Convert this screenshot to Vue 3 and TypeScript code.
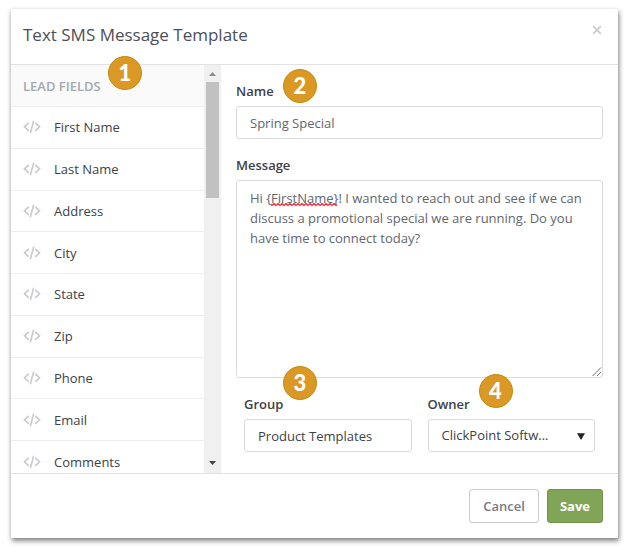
<script setup lang="ts">
import { ref } from 'vue'

const leadFields: string[] = [
  'First Name',
  'Last Name',
  'Address',
  'City',
  'State',
  'Zip',
  'Phone',
  'Email',
  'Comments',
]

const name = ref('Spring Special')
const message = ref(
  'Hi {FirstName}! I wanted to reach out and see if we can discuss a promotional special we are running. Do you have time to connect today?',
)
const group = ref('Product Templates')
const owner = ref('clickpoint')

function insertField(field: string): void {
  message.value += ` {${field.replace(/\s/g, '')}}`
}
</script>

<template>
  <div class="page">
    <form class="modal" role="dialog" aria-labelledby="modal-title" @submit.prevent>
      <header class="modal-header">
        <h1 id="modal-title" class="title">Text SMS Message Template</h1>
        <button type="button" class="close" aria-label="Close">
          <svg width="10" height="10" viewBox="0 0 10 10" aria-hidden="true">
            <path d="M1.2 1.2 8.8 8.8M8.8 1.2 1.2 8.8" fill="none" stroke="currentColor" stroke-width="1.9" />
          </svg>
        </button>
      </header>

      <div class="modal-body">
        <aside class="sidebar">
          <div class="scroller">
            <h2 class="list-title">LEAD FIELDS</h2>
            <ul class="fields">
              <li v-for="field in leadFields" :key="field">
                <button type="button" class="field-button" @click="insertField(field)">
                  <svg class="code" width="18" height="14" viewBox="0 0 18 14" aria-hidden="true">
                    <path d="M5.8 2.8 1.4 6.8 5.8 10.8M12.2 2.8 16.6 6.8 12.2 10.8" />
                    <path d="M10.7 0.8 7.3 13.2" />
                  </svg>
                  <span>{{ field }}</span>
                </button>
              </li>
            </ul>
          </div>
          <div class="scrollbar" aria-hidden="true">
            <svg class="arrow-up" width="7" height="4" viewBox="0 0 7 4"><path d="M0 4 3.5 0 7 4z" /></svg>
            <div class="track"><div class="thumb"></div></div>
            <svg class="arrow-down" width="7" height="4" viewBox="0 0 7 4"><path d="M0 0 3.5 4 7 0z" /></svg>
          </div>
          <span class="step step-1">1</span>
        </aside>

        <main class="content">
          <div class="field">
            <label for="tpl-name">Name</label>
            <input id="tpl-name" v-model="name" class="control" type="text" />
            <span class="step step-2">2</span>
          </div>
          <div class="field">
            <label for="tpl-message">Message</label>
            <div class="message-box">
              <textarea id="tpl-message" v-model="message" class="control message" spellcheck="false"></textarea>
              <svg class="squiggle" width="66" height="4" aria-hidden="true">
                <defs>
                  <pattern id="wave" width="4" height="4" patternUnits="userSpaceOnUse">
                    <path d="M-1 0 1 2.6 3 0.4 5 2.6" fill="none" stroke="#f5303c" stroke-width="1.2" />
                  </pattern>
                </defs>
                <rect width="66" height="4" fill="url(#wave)" />
              </svg>
              <svg class="grip" width="10" height="10" viewBox="0 0 10 10" aria-hidden="true">
                <path d="M0.5 9 9 0.5M5 9 9 5" fill="none" stroke="#777" stroke-width="1" />
              </svg>
            </div>
          </div>
          <div class="pair">
            <div class="field">
              <label for="tpl-group">Group</label>
              <input id="tpl-group" v-model="group" class="control dark" type="text" />
              <span class="step step-3">3</span>
            </div>
            <div class="field">
              <label for="tpl-owner">Owner</label>
              <div class="select-box">
                <select id="tpl-owner" v-model="owner" class="control dark select">
                  <option value="clickpoint">ClickPoint Softw...</option>
                </select>
                <svg class="caret" width="8" height="7" viewBox="0 0 8 7" aria-hidden="true">
                  <path d="M0 0.3H8L4 7z" fill="#222" />
                </svg>
              </div>
              <span class="step step-4">4</span>
            </div>
          </div>
        </main>
      </div>

      <footer class="modal-footer">
        <button type="button" class="btn cancel">Cancel</button>
        <button type="submit" class="btn save">Save</button>
      </footer>
    </form>
  </div>
</template>

<style>
body {
  background: #fff;
}
</style>

<style scoped>
.page,
.page * {
  box-sizing: border-box;
}

.page {
  padding: 9px 11px 13px;
  font-family: 'Open Sans', 'Noto Sans', sans-serif;
  font-size: 13px;
  line-height: 20px;
  color: #3d4148;
}

button,
input,
textarea,
select {
  font: inherit;
  margin: 0;
}

.modal {
  display: flex;
  flex-direction: column;
  background: #fff;
  box-shadow:
    1px 3px 5px rgba(0, 0, 0, 0.45),
    0 1px 4px rgba(0, 0, 0, 0.12);
}

.modal-header {
  display: flex;
  justify-content: space-between;
  align-items: flex-start;
  height: 56px;
  padding: 14px 16px 0 12px;
  border-bottom: 1px solid #e2e2e4;
}

.title {
  margin: 0;
  font-size: 17px;
  line-height: 24px;
  font-weight: 400;
  color: #4b4f57;
}

.close {
  display: flex;
  padding: 2px 0;
  border: 0;
  background: none;
  color: #ccc;
}

.modal-body {
  display: grid;
  grid-template-columns: 210px minmax(0, 1fr);
}

.sidebar {
  position: relative;
  display: grid;
  grid-template-columns: minmax(0, 1fr) 17px;
  grid-template-rows: 100%;
  contain: size;
}

.scroller {
  overflow-y: auto;
  scrollbar-width: none;
}

.list-title {
  margin: 0;
  height: 42px;
  padding: 0 12px;
  border-bottom: 1px solid #eee;
  background: #fafafa;
  font-size: 13px;
  line-height: 42px;
  font-weight: 600;
  color: #a5a8ae;
}

.fields {
  display: grid;
  grid-auto-rows: 1fr;
  min-height: 376px;
  margin: 0;
  padding: 0;
  list-style: none;
}

.fields li {
  display: grid;
  border-bottom: 1px solid #eee;
}

.field-button {
  display: flex;
  align-items: center;
  gap: 13px;
  padding: 0 12px;
  border: 0;
  background: none;
  color: inherit;
  text-align: left;
}

.code {
  fill: none;
  stroke: #c8cad2;
  stroke-width: 1.6;
}

.scrollbar {
  display: flex;
  flex-direction: column;
  align-items: center;
  padding: 7px 2px 8px;
  background: #f0f0f0;
}

.arrow-up {
  fill: #8c8c8c;
}

.arrow-down {
  fill: #444;
}

.track {
  flex: 1;
  width: 100%;
  padding: 6px 0;
}

.thumb {
  height: 31%;
  background: #c1c1c1;
}

.content {
  display: flex;
  flex-direction: column;
  gap: 16px;
  padding: 16px 15px 21px;
}

.field {
  position: relative;
}

.field label {
  display: block;
  margin-bottom: 5px;
  font-weight: 600;
}

.control {
  display: block;
  width: 100%;
  height: 33px;
  padding: 0 13px;
  border: 1px solid #d9dadd;
  border-radius: 3px;
  outline: 0;
  background: #fff;
  color: #62666e;
}

.dark {
  color: #3d4148;
}

.message-box,
.select-box {
  position: relative;
}

.message {
  height: 198px;
  padding: 7px 13px;
  resize: none;
  overflow: hidden;
}

.squiggle {
  position: absolute;
  left: 35px;
  top: 23px;
}

.grip {
  position: absolute;
  right: 1px;
  bottom: 1px;
}

.pair {
  display: grid;
  grid-template-columns: 1fr 1fr;
  gap: 16px;
  padding: 0 8px;
}

.select {
  appearance: none;
  padding-bottom: 2px;
}

.caret {
  position: absolute;
  right: 10px;
  top: 14px;
}

.modal-footer {
  display: flex;
  justify-content: flex-end;
  gap: 8px;
  padding: 15px;
  border-top: 1px solid #e2e2e4;
}

.btn {
  height: 34px;
  padding: 0 12px;
  border: 1px solid #c9cacf;
  border-radius: 3px;
  background: #fff;
  color: #777b85;
  font-weight: 600;
}

.cancel {
  padding: 0 13px;
}

.save {
  border-color: #6f9449;
  background: #81a557;
  color: #fff;
  font-weight: 700;
}

.step {
  position: absolute;
  width: 34px;
  height: 34px;
  border: 1px solid #c08c12;
  border-radius: 50%;
  background: #dc9824;
  color: #fff;
  font-family: Lato, 'Open Sans', sans-serif;
  font-size: 22px;
  line-height: 32px;
  font-weight: 900;
  text-align: center;
}

.step-1 {
  left: 97px;
  top: -9px;
}

.step-2 {
  left: 47px;
  top: -12px;
}

.step-3 {
  left: 39px;
  top: -28px;
}

.step-4 {
  left: 51px;
  top: -20px;
}
</style>
